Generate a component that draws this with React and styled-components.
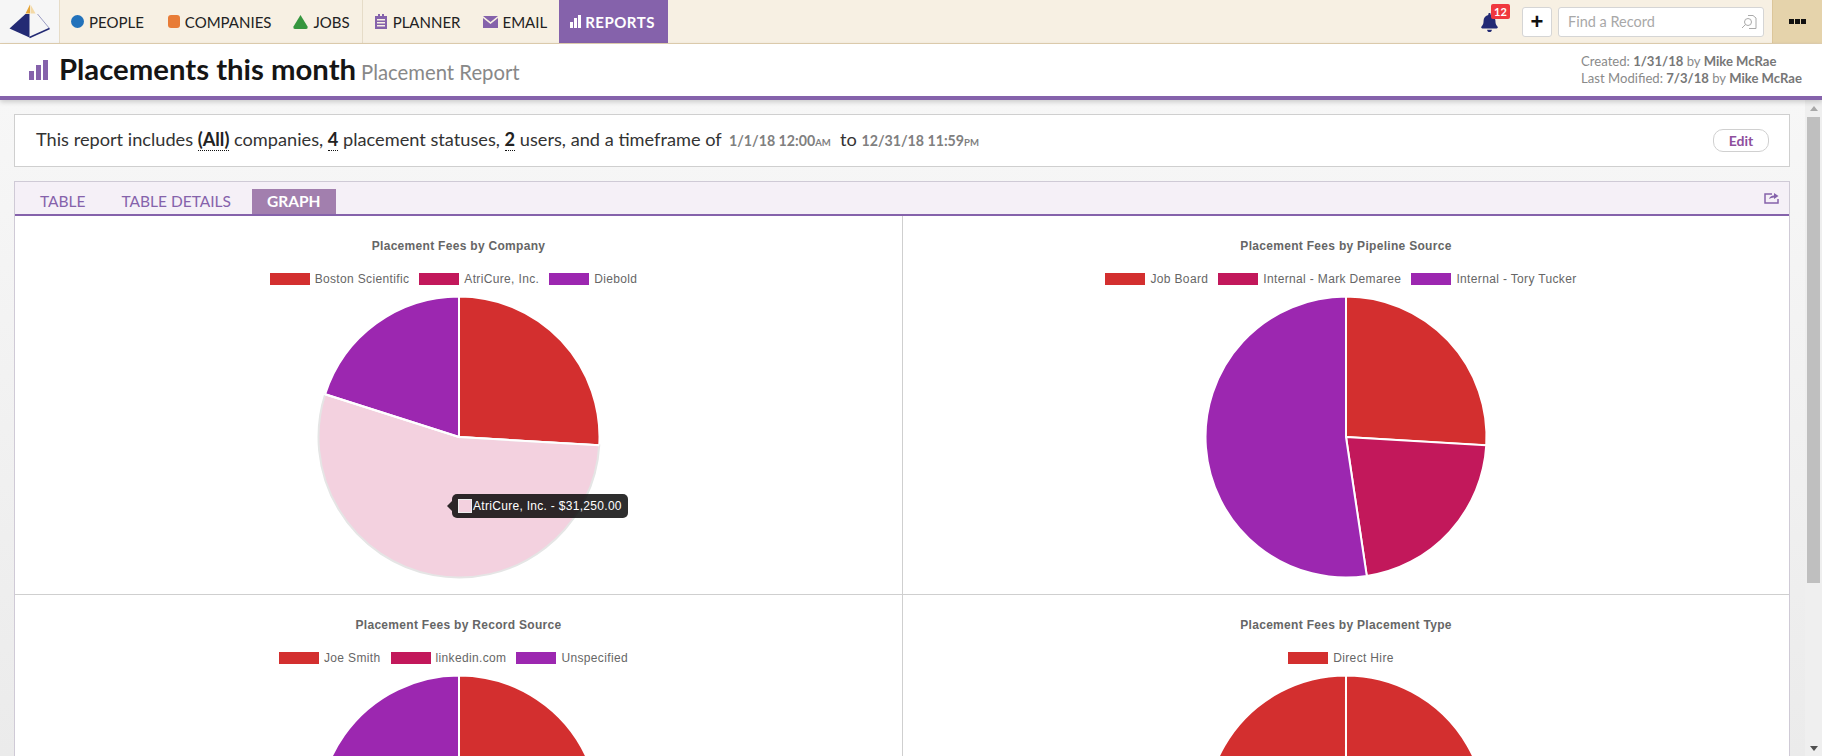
import React from "react";
import styled, { createGlobalStyle } from "styled-components";
import { FaBell } from "react-icons/fa";

const SANS = `Lato, "Open Sans", "Liberation Sans", sans-serif`;
const CHART = `"Liberation Sans", Arial, sans-serif`;
const PURPLE = "#8562ab";

const RED = "#d32f2f";
const CRIMSON = "#c2185b";
const VIOLET = "#9c27b0";

const charts = [
    {
        title: "Placement Fees by Company",
        legend: [["Boston Scientific", RED], ["AtriCure, Inc.", CRIMSON], ["Diebold", VIOLET]],
        slices: [[0, 93.4, RED], [93.4, 287.7, "#f3d1df", true], [287.7, 360, VIOLET]],
        tip: true,
    },
    {
        title: "Placement Fees by Pipeline Source",
        legend: [["Job Board", RED], ["Internal - Mark Demaree", CRIMSON], ["Internal - Tory Tucker", VIOLET]],
        slices: [[0, 93.4, RED], [93.4, 171.5, CRIMSON], [171.5, 360, VIOLET]],
    },
    {
        title: "Placement Fees by Record Source",
        legend: [["Joe Smith", RED], ["linkedin.com", CRIMSON], ["Unspecified", VIOLET]],
        slices: [[0, 135, RED], [135, 250, CRIMSON], [250, 360, VIOLET]],
    },
    {
        title: "Placement Fees by Placement Type",
        legend: [["Direct Hire", RED]],
        slices: [[0, 359.99, RED]],
    },
];

function slicePath(from, to) {
    const c = 147;
    const r = 140.5;
    const pt = (a) => {
        const rad = (a * Math.PI) / 180;
        return `${(c + r * Math.sin(rad)).toFixed(2)} ${(c - r * Math.cos(rad)).toFixed(2)}`;
    };
    const large = to - from > 180 ? 1 : 0;
    return `M${c} ${c} L${pt(from)} A${r} ${r} 0 ${large} 1 ${pt(to)} Z`;
}

function App() {
    return (
        <>
            <GlobalStyle />
            <Page>
                <Nav>
                    <LogoBox>
                        <svg width="44" height="38" viewBox="0 0 44 38">
                            <path d="M22 1.500 L17.500 10.500 H22 Z" fill="#e5a53a" />
                            <path d="M22.500 1.500 L27.500 10.500 H22.500 Z" fill="#f3d9a6" />
                            <path d="M17.500 11 L1.500 25.500 L21.500 34.500 V11 Z" fill="#232a74" />
                            <path d="M29.500 11 L41.500 25.500" fill="none" stroke="#9a9cc4" strokeWidth="1" />
                            <path d="M41.500 25.500 L21.500 34.500" fill="none" stroke="#232a74" strokeWidth="1.500" />
                        </svg>
                    </LogoBox>
                    <NavGroup $divider>
                        <NavItem $right={13}>
                            <svg width="13" height="13" viewBox="0 0 13 13"><circle cx="6.500" cy="6.500" r="6.500" fill="#2272bb" /></svg>
                            PEOPLE
                        </NavItem>
                        <NavItem $right={11}>
                            <svg width="12" height="13" viewBox="0 0 12 13"><rect width="12" height="13" rx="3" fill="#e87c37" /></svg>
                            COMPANIES
                        </NavItem>
                        <NavItem>
                            <svg width="15" height="14" viewBox="0 0 15 14"><path d="M7.500 0 L14.500 11.500 Q15 14 13 14 H2 Q0 14 .5 11.500 Z" fill="#35963e" /></svg>
                            JOBS
                        </NavItem>
                    </NavGroup>
                    <NavGroup>
                        <NavItem>
                            <svg width="14" height="15" viewBox="0 0 14 15">
                                <path d="M1 2 H4 V0 H6 V2 H8 V0 H10 V2 H13 V15 H1 Z M3 5 V6.500 H11 V5 Z M3 8 V9.500 H11 V8 Z M3 11 V12.500 H11 V11 Z" fill={PURPLE} fillRule="evenodd" />
                            </svg>
                            PLANNER
                        </NavItem>
                        <NavItem $gap={4}>
                            <svg width="15" height="12" viewBox="0 0 15 12">
                                <path d="M0 0 H15 L7.500 6 Z M0 2 L7.500 8 L15 2 V12 H0 Z" fill={PURPLE} />
                            </svg>
                            EMAIL
                        </NavItem>
                        <NavItem $active $gap={4} $right={13}>
                            <BarsIcon $color="#fff" $size={13} />
                            REPORTS
                        </NavItem>
                    </NavGroup>
                    <NavRight>
                        <BellWrap>
                            <FaBell size={19} color="#232a74" />
                            <Badge>12</Badge>
                        </BellWrap>
                        <PlusButton>+</PlusButton>
                        <SearchBox>
                            Find a Record
                            <svg width="16" height="16" viewBox="0 0 16 16" fill="none" stroke="#aaa" strokeWidth="1">
                                <path d="M7 1.500 H12 L15 4 V14.500 H8" />
                                <circle cx="7" cy="8" r="3.500" />
                                <path d="M4.500 10.500 L1 14" />
                            </svg>
                        </SearchBox>
                        <MenuBlock>
                            <i /><i /><i />
                        </MenuBlock>
                    </NavRight>
                </Nav>

                <Header>
                    <HeaderTitle>
                        <BarsIcon $color={PURPLE} $size={20} />
                        <h1>Placements this month</h1>
                        <span>Placement Report</span>
                    </HeaderTitle>
                    <Meta>
                        <div>Created: <b>1/31/18</b> by <b>Mike McRae</b></div>
                        <div>Last Modified: <b>7/3/18</b> by <b>Mike McRae</b></div>
                    </Meta>
                </Header>

                <Body>
                    <Content>
                        <Summary>
                            <SummaryText>
                                This report includes <Dotted>(All)</Dotted> companies, <Dotted>4</Dotted> placement statuses,{" "}
                                <Dotted>2</Dotted> users, and a timeframe of <DateText $lead>1/1/18 12:00<small>AM</small></DateText>&nbsp; to{" "}
                                <DateText>12/31/18 11:59<small>PM</small></DateText>
                            </SummaryText>
                            <EditButton>Edit</EditButton>
                        </Summary>

                        <Panel>
                            <Tabs>
                                <Tab>TABLE</Tab>
                                <Tab>TABLE DETAILS</Tab>
                                <Tab $active>GRAPH</Tab>
                                <ShareIcon width="15" height="13" viewBox="0 0 15 13" fill="none" stroke={PURPLE} strokeWidth="1.500">
                                    <path d="M8 3 H1 V12 H14 V8" />
                                    <path d="M5 8 Q6 4.500 10 4.500 V2 L14.500 5 L10 8 V6.500 Q7 6.500 5 8 Z" fill={PURPLE} stroke="none" />
                                </ShareIcon>
                            </Tabs>
                            <ChartGrid>
                                {charts.map((chart) => (
                                    <ChartCell key={chart.title}>
                                        <ChartTitle>{chart.title}</ChartTitle>
                                        <Legend>
                                            {chart.legend.map(([label, color]) => (
                                                <LegendItem key={label}>
                                                    <Swatch $color={color} />
                                                    {label}
                                                </LegendItem>
                                            ))}
                                        </Legend>
                                        <PieSvg width="294" height="294" viewBox="0 0 294 294">
                                            {chart.slices.map(([from, to, color, hover]) => (
                                                <path
                                                    key={from}
                                                    d={slicePath(from, to)}
                                                    fill={color}
                                                    stroke={hover ? "#e5e5e5" : "#fff"}
                                                    strokeWidth="2"
                                                />
                                            ))}
                                            {chart.tip && (
                                                <>
                                                    <path d="M147 147 L287.300 155.300" stroke="#fff" strokeWidth="2" />
                                                    <path d="M147 147 L13.100 104.300" stroke="#fff" strokeWidth="2" />
                                                </>
                                            )}
                                        </PieSvg>
                                        {chart.tip && (
                                            <Tooltip>
                                                <TipSwatch />
                                                AtriCure, Inc. - $31,250.00
                                            </Tooltip>
                                        )}
                                    </ChartCell>
                                ))}
                            </ChartGrid>
                        </Panel>
                    </Content>
                    <ScrollTrack>
                        <ScrollArrow />
                        <ScrollThumb />
                        <ScrollArrow $down />
                    </ScrollTrack>
                </Body>
            </Page>
        </>
    );
}

const GlobalStyle = createGlobalStyle`
    html, body {
        margin: 0;
        height: 100%;
        overflow: hidden;
        background: #fff;
        font-family: ${SANS};
    }
`;

const Page = styled.div`
    display: flex;
    flex-direction: column;
    height: 756px;
    overflow: hidden;
`;

const Nav = styled.div`
    display: flex;
    align-items: stretch;
    flex: none;
    height: 43px;
    background: #f7f0e3;
    border-bottom: 1px solid #e2d0b0;
`;

const LogoBox = styled.div`
    display: flex;
    align-items: center;
    justify-content: center;
    width: 59px;
    background: #f6f6f6;
    border-right: 1px solid #e6dcc8;
`;

const NavGroup = styled.div`
    display: flex;
    align-items: stretch;
    border-right: ${(p) => (p.$divider ? "1px solid #e6dcc8" : "none")};
`;

const NavItem = styled.div`
    display: flex;
    align-items: center;
    gap: ${(p) => p.$gap ?? 5}px;
    padding: 0 ${(p) => p.$right ?? 12}px 0 11px;
    font-size: 15px;
    font-weight: ${(p) => (p.$active ? 700 : 400)};
    letter-spacing: ${(p) => (p.$active ? "0.5px" : "0")};
    color: ${(p) => (p.$active ? "#fff" : "#222")};
    background: ${(p) => (p.$active ? PURPLE : "transparent")};
`;

const BarsWrap = styled.span`
    display: inline-flex;
    align-items: flex-end;
    gap: ${(p) => Math.floor(p.$size / 8)}px;
    height: ${(p) => p.$size}px;
    flex: none;

    i {
        display: block;
        width: ${(p) => Math.round(p.$size / 4)}px;
        background: ${(p) => p.$color};
    }
    i:nth-child(1) { height: 45%; }
    i:nth-child(2) { height: 75%; }
    i:nth-child(3) { height: 100%; }
`;

function BarsIcon(props) {
    return (
        <BarsWrap {...props}>
            <i /><i /><i />
        </BarsWrap>
    );
}

const NavRight = styled.div`
    display: flex;
    align-items: center;
    margin-left: auto;
`;

const BellWrap = styled.div`
    position: relative;
    display: flex;
    margin-right: 23px;
    top: 1px;
`;

const Badge = styled.span`
    position: absolute;
    left: 11px;
    top: -9px;
    width: 19px;
    height: 15px;
    border-radius: 2px;
    background: #f0383e;
    color: #fff;
    font-size: 11px;
    font-weight: 700;
    line-height: 15px;
    text-align: center;
`;

const PlusButton = styled.div`
    display: flex;
    align-items: center;
    justify-content: center;
    box-sizing: border-box;
    width: 30px;
    height: 30px;
    margin-right: 6px;
    background: #fff;
    border: 1px solid #d5d5d5;
    border-radius: 3px;
    color: #111;
    font: 700 22px/1 ${CHART};
`;

const SearchBox = styled.div`
    display: flex;
    align-items: center;
    justify-content: space-between;
    box-sizing: border-box;
    width: 206px;
    height: 30px;
    margin-right: 8px;
    padding: 0 6px 0 9px;
    background: #fff;
    border: 1px solid #d5d5d5;
    border-radius: 3px;
    color: #a8a8a8;
    font-size: 14.500px;
`;

const MenuBlock = styled.div`
    display: flex;
    align-items: center;
    justify-content: center;
    gap: 1px;
    width: 50px;
    height: 43px;
    background: #e5d3ab;
    border-left: 1px solid #dcc69a;
    box-sizing: border-box;

    i {
        display: block;
        width: 5px;
        height: 5px;
        background: #111;
    }
`;

const Header = styled.div`
    display: flex;
    align-items: center;
    justify-content: space-between;
    flex: none;
    height: 52px;
    padding: 0 20px 0 29px;
    background: #fff;
    border-bottom: 4px solid ${PURPLE};
    box-shadow: 0 2px 5px rgba(0, 0, 0, 0.18);
    position: relative;
`;

const HeaderTitle = styled.div`
    display: flex;
    align-items: baseline;
    margin-bottom: 3px;

    ${BarsWrap} {
        align-self: center;
        margin-top: 3px;
        margin-right: 11px;
    }

    h1 {
        margin: 0 5px 0 0;
        font-size: 29.300px;
        font-weight: 700;
        color: #151515;
    }

    span:last-child {
        font-size: 20.300px;
        color: #888;
    }
`;

const Meta = styled.div`
    font-size: 13.100px;
    line-height: 17px;
    color: #8a8a8a;

    b {
        color: #777;
    }
`;

const Body = styled.div`
    display: flex;
    flex: 1;
    min-height: 0;
    background: linear-gradient(#f7f7f7, #ebebeb);
`;

const Content = styled.div`
    flex: 1;
    min-width: 0;
    padding: 14px 15px 0 14px;
    overflow: hidden;
`;

const Summary = styled.div`
    display: flex;
    align-items: center;
    justify-content: space-between;
    box-sizing: border-box;
    height: 53px;
    padding: 0 20px 3px 21px;
    background: #fff;
    border: 1px solid #cfcfcf;
`;

const SummaryText = styled.div`
    font-size: 18.200px;
    color: #333;
`;

const Dotted = styled.b`
    color: #222;
    border-bottom: 1px dotted #111;
`;

const DateText = styled.b`
    margin-left: ${(p) => (p.$lead ? "3px" : "0")};
    font-size: 14.200px;
    color: #808080;

    small {
        font-size: 9.500px;
    }
`;

const EditButton = styled.div`
    box-sizing: border-box;
    width: 56px;
    height: 23px;
    margin-top: 3px;
    border: 1px solid #d0d0d0;
    border-radius: 10px;
    color: #8e4f9d;
    font-size: 14px;
    font-weight: 700;
    line-height: 21px;
    text-align: center;
`;

const Panel = styled.div`
    margin-top: 14px;
    background: #fff;
    border: 1px solid #cfcad6;
    border-bottom: none;
`;

const Tabs = styled.div`
    display: flex;
    align-items: flex-end;
    position: relative;
    height: 32px;
    padding-left: 7px;
    background: #f5f0f7;
    border-bottom: 2px solid ${PURPLE};
`;

const Tab = styled.div`
    margin-left: ${(p) => (p.$active ? 3 : 0)}px;
    padding: 0 ${(p) => (p.$active ? 15 : 18)}px;
    height: 25px;
    font-size: 15.500px;
    font-weight: ${(p) => (p.$active ? 700 : 400)};
    line-height: 25px;
    color: ${(p) => (p.$active ? "#fff" : PURPLE)};
    background: ${(p) => (p.$active ? "#a27fae" : "transparent")};
`;

const ShareIcon = styled.svg`
    position: absolute;
    right: 10px;
    top: 9px;
`;

const ChartGrid = styled.div`
    display: grid;
    grid-template-columns: 888px 1fr;
`;

const ChartCell = styled.div`
    position: relative;
    display: flex;
    flex-direction: column;
    align-items: center;
    padding-top: 23px;
    padding-bottom: 10px;
    border-bottom: 1px solid #cfcfcf;

    &:nth-child(odd) {
        border-right: 1px solid #cfcfcf;
    }
`;

const ChartTitle = styled.div`
    font: 700 12px/14px ${CHART};
    letter-spacing: 0.3px;
    color: #666;
`;

const Legend = styled.div`
    display: flex;
    gap: 10px;
    height: 12px;
    margin: 20px 10px 5px 0;
`;

const LegendItem = styled.div`
    display: flex;
    align-items: center;
    gap: 5px;
    font: 12px/12px ${CHART};
    letter-spacing: 0.35px;
    color: #666;
`;

const Swatch = styled.span`
    display: block;
    width: 40px;
    height: 12px;
    background: ${(p) => p.$color};
`;

const PieSvg = styled.svg`
    display: block;
    flex: none;
`;

const Tooltip = styled.div`
    position: absolute;
    left: 437px;
    top: 278px;
    display: flex;
    align-items: center;
    gap: 1px;
    height: 24px;
    padding: 0 6px;
    border-radius: 5px;
    background: rgba(0, 0, 0, 0.82);
    color: #fff;
    font: 12px/1 ${CHART};
    letter-spacing: 0.3px;
    white-space: nowrap;

    &::before {
        content: "";
        position: absolute;
        left: -5px;
        top: 7px;
        border: 5px solid transparent;
        border-left: none;
        border-right-color: rgba(0, 0, 0, 0.82);
    }
`;

const TipSwatch = styled.span`
    display: block;
    box-sizing: border-box;
    width: 14px;
    height: 14px;
    background: #f3d1df;
    border: 1px solid #eee;
`;

const ScrollTrack = styled.div`
    display: flex;
    flex-direction: column;
    align-items: center;
    flex: none;
    width: 17px;
    background: #efefef;
`;

const ScrollArrow = styled.div`
    flex: none;
    width: 0;
    height: 0;
    margin: ${(p) => (p.$down ? "auto 0 5px" : "6px 0 4px")};
    border-left: 4px solid transparent;
    border-right: 4px solid transparent;
    ${(p) => (p.$down ? "border-top: 5px solid #505050;" : "border-bottom: 5px solid #a8a8a8;")}
`;

const ScrollThumb = styled.div`
    flex: none;
    width: 13px;
    height: 466px;
    margin-top: 2px;
    background: #bfbfbf;
`;

export default App;
